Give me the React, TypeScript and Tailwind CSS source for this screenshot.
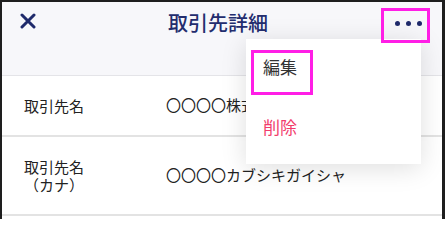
import React from "react";

const font = { fontFamily: '"Noto Sans CJK JP", "Noto Sans", sans-serif' };

const rows = [
  { label: ["取引先名"], value: "〇〇〇〇株式会社", h: "h-[61px]" },
  { label: ["取引先名", "（カナ）"], value: "〇〇〇〇カブシキガイシャ", h: "h-[79px]" },
];

export default function App() {
  return (
    <div className="w-[445px] h-[219px] overflow-hidden bg-[#1e1e1e] pt-[2px] pl-[2px] pr-[3px]" style={font}>
      <div className="relative h-full bg-white">
        {/* Header */}
        <div className="h-[74px] bg-[#f7f7fa] border-b border-[#e4e4e8] grid grid-cols-[1fr_auto_1fr] items-start pt-[8px]">
          <div className="pl-[18px] pt-[3px]">
            <svg width="16" height="16" viewBox="0 0 16 16" fill="none">
              <path d="M2 2L14 14M14 2L2 14" stroke="#1f2a6b" strokeWidth="3" strokeLinecap="round" />
            </svg>
          </div>
          <h1 className="text-[20px] leading-[26px] font-medium text-[#232d6e] -ml-[8px]">取引先詳細</h1>
          <div className="flex justify-end pr-[20px] pt-[11px] gap-[6px]">
            <span className="w-[5px] h-[5px] rounded-full bg-[#1f2a6b]" />
            <span className="w-[5px] h-[5px] rounded-full bg-[#1f2a6b]" />
            <span className="w-[5px] h-[5px] rounded-full bg-[#1f2a6b]" />
          </div>
        </div>

        {/* Rows */}
        {rows.map((row) => (
          <div key={row.value} className={`${row.h} flex items-center border-b-2 border-[#e3e3e3] text-[15px] text-[#222]`}>
            <div className="w-[164px] pl-[22px] leading-[18px]">
              {row.label.map((l, i) => (
                <div key={i}>{l}</div>
              ))}
            </div>
            <div>{row.value}</div>
          </div>
        ))}

        {/* Dropdown menu */}
        <div className="absolute left-[244px] top-[37px] w-[175px] h-[125px] bg-white shadow-[0_4px_24px_rgba(0,0,0,0.13)] flex flex-col pl-[17px] text-[17px]">
          <div className="pt-[15px] h-[62px] text-[#333]">編集</div>
          <div className="pt-[13px] text-[#f23c6c]">削除</div>
        </div>

        {/* Highlight boxes */}
        <div className="absolute left-[379px] top-[6px] w-[49px] h-[35px] border-[3px] border-[#ff1ee6]" />
        <div className="absolute left-[249px] top-[48px] w-[62px] h-[45px] border-[3px] border-[#ff1ee6]" />
      </div>
    </div>
  );
}
